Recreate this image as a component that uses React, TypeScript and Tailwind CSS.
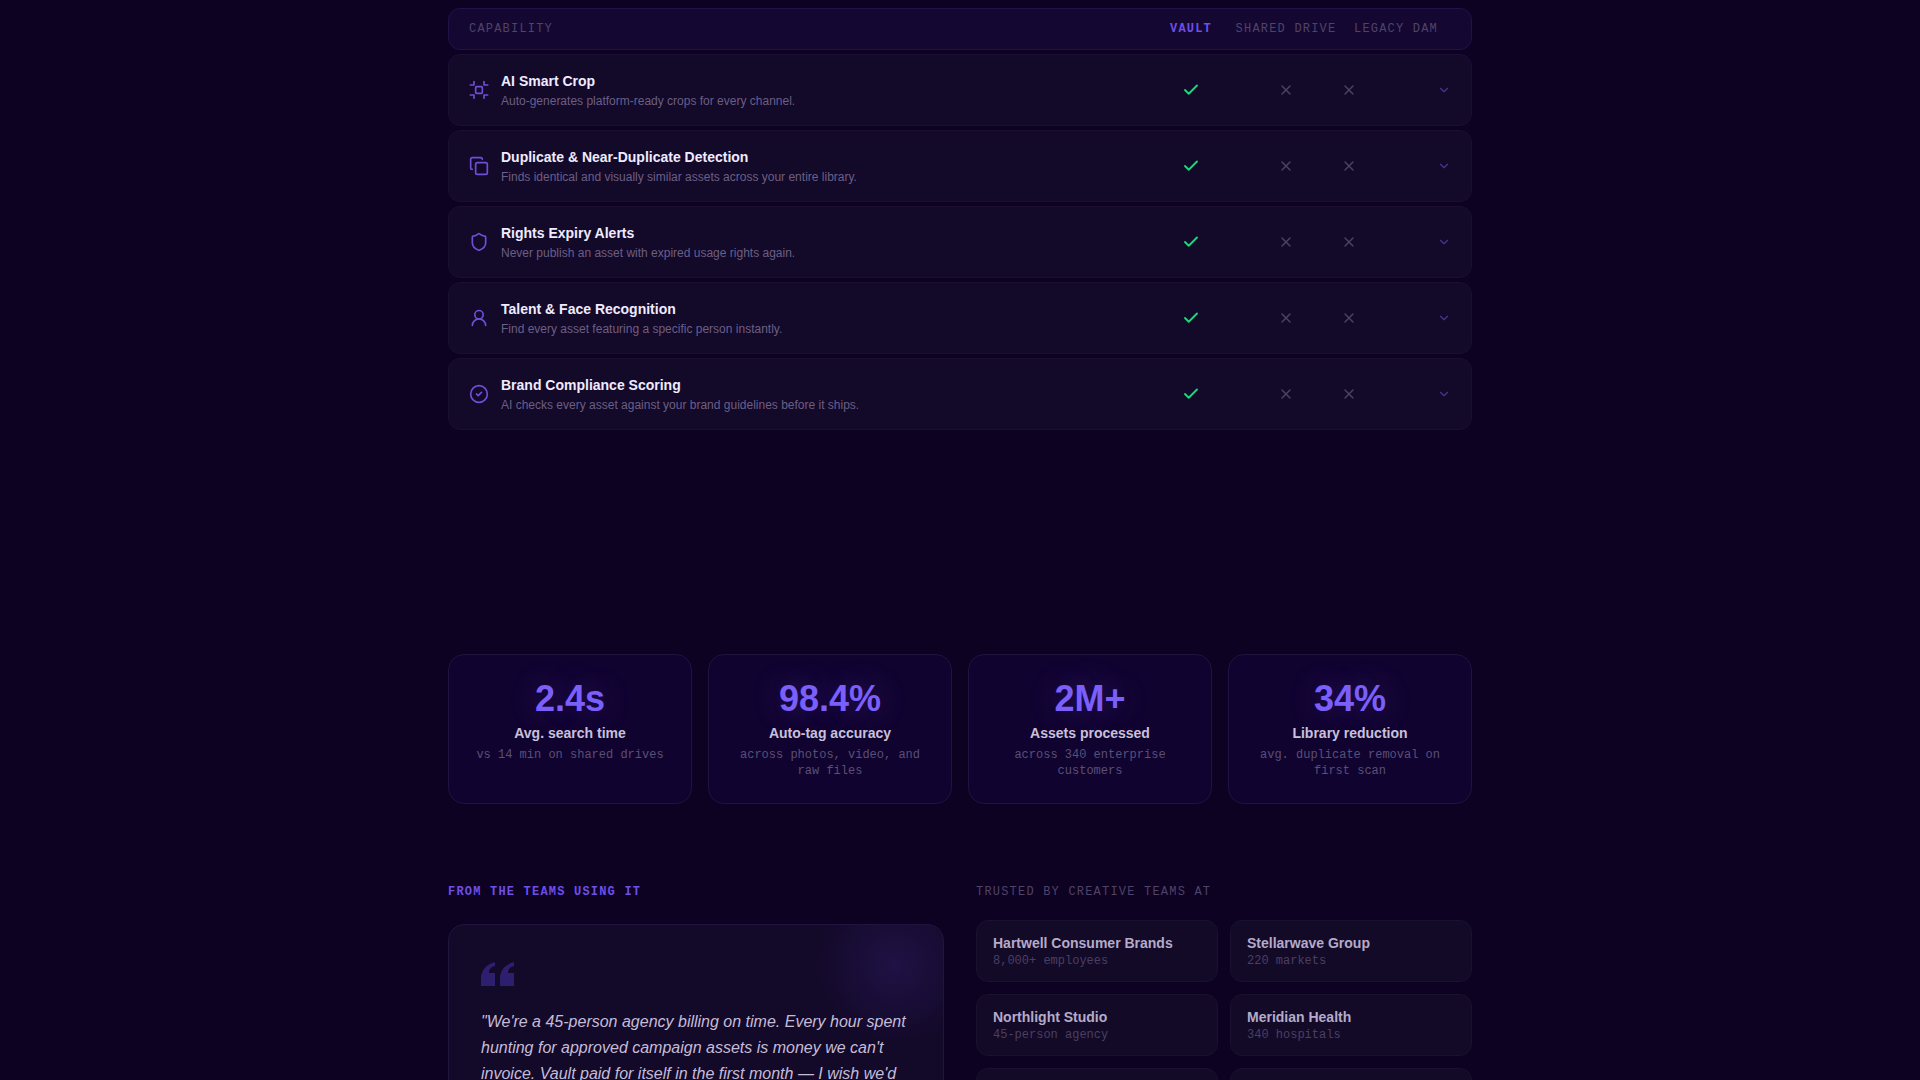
import { Check, ChevronDown, CircleCheck, Copy, Shield, UserRound, X } from 'lucide-react';
import type { ReactNode } from 'react';

const mono = 'font-["Liberation_Mono",monospace]';

function CropIcon() {
  return (
    <svg width="20" height="20" viewBox="0 0 24 24" fill="none" stroke="currentColor" strokeWidth="2" strokeLinecap="round" strokeLinejoin="round">
      <rect x="8" y="8" width="8" height="8" rx="1" />
      <path d="M6 2v4H1.5M18 2v4h4.5M6 22v-4H1.5M18 22v-4h4.5" />
    </svg>
  );
}

function QuoteMark() {
  return (
    <svg width="33" height="24" viewBox="0 0 33 24" fill="currentColor">
      <path d="M14 0C6 2 0 8 0 16V24H14V11H8C8 7 10 5 14 4Z" />
      <path d="M33 0C25 2 19 8 19 16V24H33V11H27C27 7 29 5 33 4Z" />
    </svg>
  );
}

const features: { icon: ReactNode; title: string; desc: string }[] = [
  { icon: <CropIcon />, title: 'AI Smart Crop', desc: 'Auto-generates platform-ready crops for every channel.' },
  { icon: <Copy size={20} />, title: 'Duplicate & Near-Duplicate Detection', desc: 'Finds identical and visually similar assets across your entire library.' },
  { icon: <Shield size={20} />, title: 'Rights Expiry Alerts', desc: 'Never publish an asset with expired usage rights again.' },
  { icon: <UserRound size={20} />, title: 'Talent & Face Recognition', desc: 'Find every asset featuring a specific person instantly.' },
  { icon: <CircleCheck size={20} />, title: 'Brand Compliance Scoring', desc: 'AI checks every asset against your brand guidelines before it ships.' },
];

const stats = [
  { value: '2.4s', label: 'Avg. search time', sub: 'vs 14 min on shared drives' },
  { value: '98.4%', label: 'Auto-tag accuracy', sub: 'across photos, video, and raw files' },
  { value: '2M+', label: 'Assets processed', sub: 'across 340 enterprise customers' },
  { value: '34%', label: 'Library reduction', sub: 'avg. duplicate removal on first scan' },
];

const teams = [
  { name: 'Hartwell Consumer Brands', meta: '8,000+ employees' },
  { name: 'Stellarwave Group', meta: '220 markets' },
  { name: 'Northlight Studio', meta: '45-person agency' },
  { name: 'Meridian Health', meta: '340 hospitals' },
  { name: 'Oakline Retail', meta: '1,200 stores' },
  { name: 'Fennec Media', meta: '60 publications' },
];

function FeatureRow({ icon, title, desc }: { icon: ReactNode; title: string; desc: string }) {
  return (
    <div className="grid h-[72px] grid-cols-[1fr_78px_112px_14px_95px] items-center rounded-xl border border-[#1a0f33] bg-[#130929] px-5">
      <div className="flex items-center gap-3">
        <span className="text-[#6d4fd8]">{icon}</span>
        <div>
          <div className="text-sm leading-5 font-semibold text-[#f0ebff]">{title}</div>
          <div className="mt-0.5 text-xs leading-4 text-[#6b5f85]">{desc}</div>
        </div>
      </div>
      <Check size={18} strokeWidth={2.5} className="justify-self-center text-[#1fd67f]" />
      <X size={16} className="justify-self-center text-[#4d4266]" />
      <X size={16} className="justify-self-center text-[#4d4266]" />
      <ChevronDown size={14} className="justify-self-end text-[#4a3590]" />
    </div>
  );
}

export default function App() {
  return (
    <div className='h-[1080px] overflow-hidden bg-[#0d0222] font-["Liberation_Sans",Arial,sans-serif]'>
      <div className="mx-auto w-[1024px] pt-2">
        <section className="flex flex-col gap-1">
          <div className={`grid h-[42px] grid-cols-[1fr_78px_112px_109px] items-center rounded-xl border border-[#21124a] bg-[#140833] px-5 text-xs tracking-[0.1em] text-[#4f4368] ${mono}`}>
            <span>CAPABILITY</span>
            <span className="text-center font-bold text-[#6d4fe8]">VAULT</span>
            <span className="text-center">SHARED DRIVE</span>
            <span className="pl-3">LEGACY DAM</span>
          </div>
          {features.map((f) => (
            <FeatureRow key={f.title} {...f} />
          ))}
        </section>

        <section className="mt-[224px] grid grid-cols-4 gap-4">
          {stats.map((s) => (
            <div key={s.value} className="h-[150px] rounded-2xl border border-[#1f1340] bg-[#110330] px-5 pt-6 text-center">
              <div className="text-4xl leading-10 font-bold text-[#7b5ffa] [text-shadow:0_0_30px_rgba(123,95,250,0.3)]">{s.value}</div>
              <div className="mt-1 text-sm leading-5 font-semibold text-[#c9c0dc]">{s.label}</div>
              <div className={`mt-1 text-xs leading-4 text-[#5a4f75] ${mono}`}>{s.sub}</div>
            </div>
          ))}
        </section>

        <section className="mt-20 grid grid-cols-2 gap-8">
          <div>
            <h3 className={`text-xs leading-4 font-bold tracking-[0.1em] text-[#6d4fe8] ${mono}`}>FROM THE TEAMS USING IT</h3>
            <div className="relative mt-6 h-[300px] overflow-hidden rounded-2xl border border-[#201440] bg-[#130929] p-8">
              <div className="absolute -top-10 -right-8 h-40 w-40 rounded-full bg-[radial-gradient(circle,#1f1245_0%,transparent_70%)]" />
              <div className="relative h-9 pt-[5px] text-[#2e1e6e]">
                <QuoteMark />
              </div>
              <p className="relative mt-4 text-base leading-[26px] text-[#c5bcd8] italic">
                "We're a 45-person agency billing on time. Every hour spent hunting for approved campaign assets is money we can't invoice. Vault paid for itself in the first month — I wish we'd switched sooner."
              </p>
            </div>
          </div>
          <div>
            <h3 className={`text-xs leading-4 tracking-[0.1em] text-[#4f4368] ${mono}`}>TRUSTED BY CREATIVE TEAMS AT</h3>
            <div className="mt-5 grid grid-cols-2 gap-3">
              {teams.map((t) => (
                <div key={t.name} className="h-[62px] rounded-xl border border-[#1a1030] bg-[#130a28] px-4 pt-3">
                  <div className="text-sm leading-5 font-semibold text-[#b5aac9]">{t.name}</div>
                  <div className={`text-xs leading-4 text-[#4a3f62] ${mono}`}>{t.meta}</div>
                </div>
              ))}
            </div>
          </div>
        </section>
      </div>
    </div>
  );
}
